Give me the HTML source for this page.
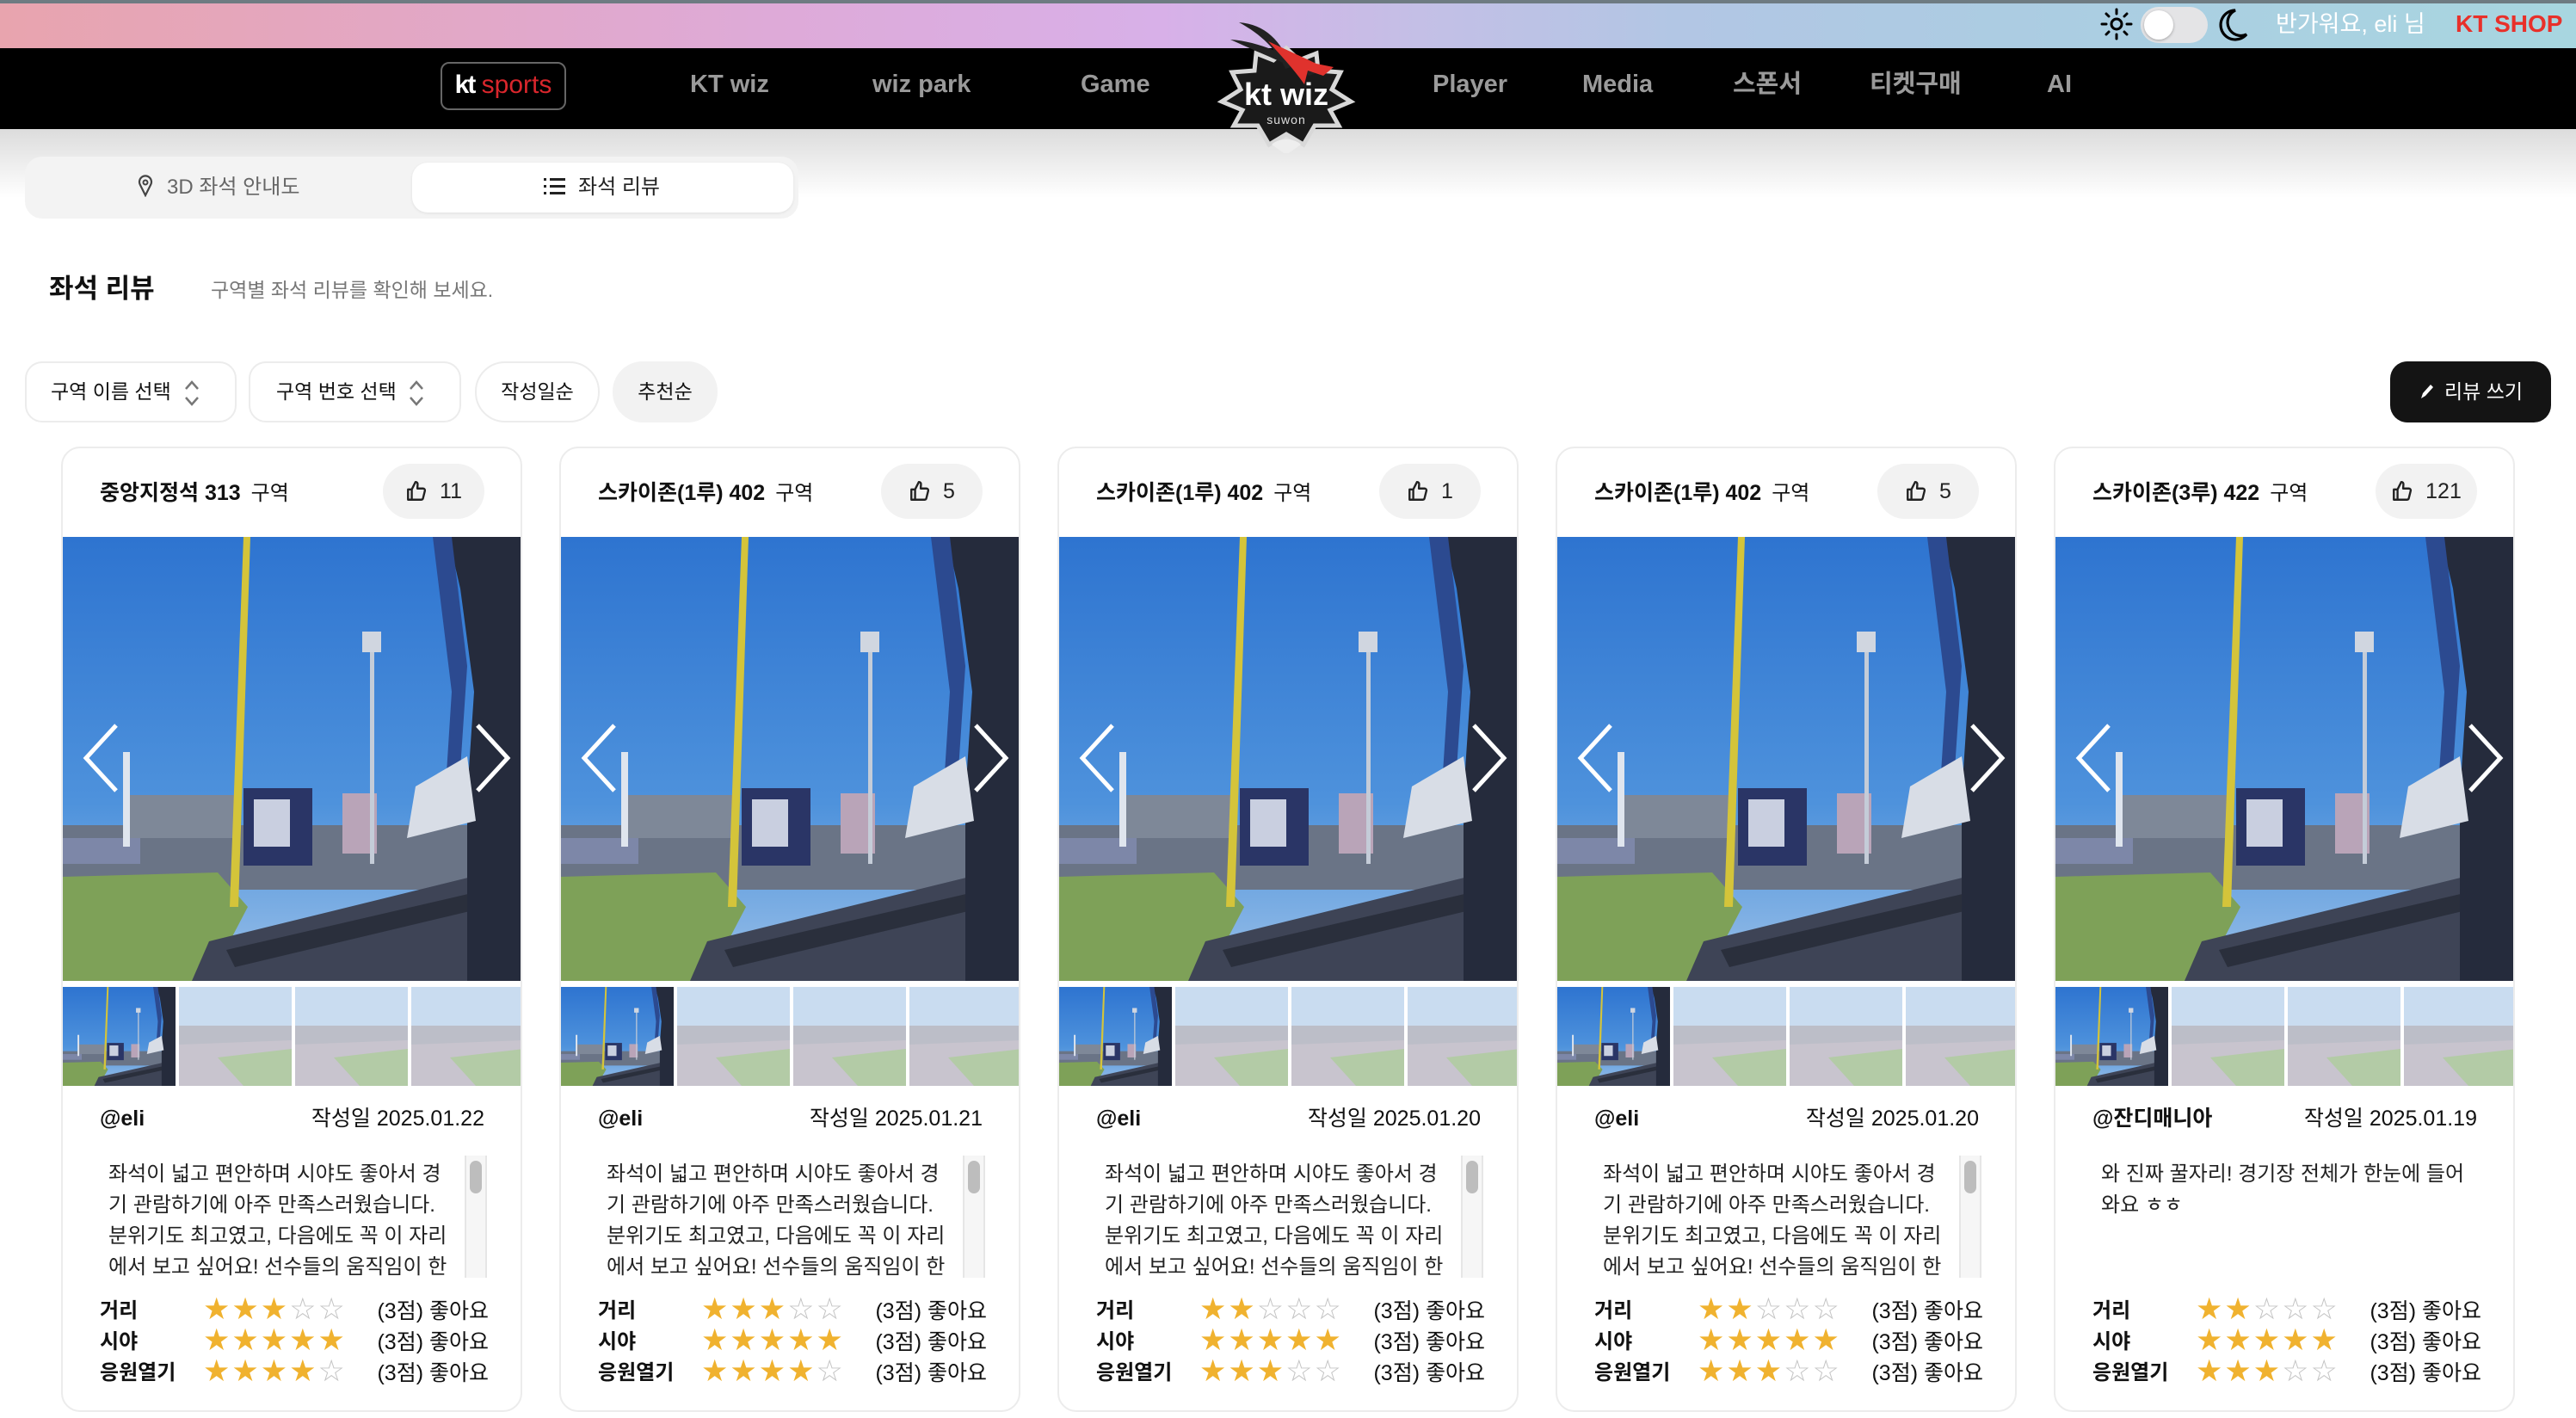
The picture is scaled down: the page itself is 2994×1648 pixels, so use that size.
<!DOCTYPE html>
<html><head><meta charset="utf-8">
<style>
*{box-sizing:border-box;margin:0;padding:0}
body{width:2994px;height:1648px;overflow:hidden;background:#fff;font-family:"Liberation Sans","Noto Sans CJK KR",sans-serif;position:relative;color:#111}
.abs{position:absolute}
.top{left:0;top:0;width:2994px;height:56px;background:linear-gradient(90deg,#e8a4ae 0%,#deaad8 30%,#d8b0e8 45%,#c4bfe6 55%,#b2c6e4 65%,#abcde2 80%,#a8d6e0 100%);border-top:4px solid #6e7b82}
.nav{left:0;top:56px;width:2994px;height:94px;background:#000}
.shadow{left:0;top:150px;width:2994px;height:80px;background:linear-gradient(#dcdcdc,#fff)}
.navi{top:78px;font-size:29px;font-weight:bold;color:#9a9a9a;line-height:40px;white-space:nowrap}
.card{width:536px;height:1122px;border:2px solid #ececec;border-radius:22px;background:#fff;overflow:hidden}
.ttl{left:43px;top:34px;font-size:25px;font-weight:bold;color:#111;white-space:nowrap;line-height:36px}
.ttl span{font-weight:normal;margin-left:12px;font-size:24px}
.pill{left:372px;top:18px;width:118px;height:64px;border-radius:32px;background:#f2f2f2;font-size:25px;color:#222;display:flex;align-items:center;justify-content:center;gap:14px}
.photo{left:0;top:103px;width:536px;height:516px}
.th{top:626px;width:131px;height:115px}
.user{left:43px;top:761px;font-size:25px;font-weight:bold;line-height:36px}
.date{right:42px;top:761px;font-size:25px;line-height:36px}
.body{left:53px;top:826px;width:405px;height:148px;overflow:hidden;font-size:24px;line-height:36px;color:#222;white-space:nowrap}
.sb{left:467px;top:822px;width:26px;height:142px;background:#f6f6f6;border-left:2px solid #e6e6e6;border-right:2px solid #e6e6e6}
.sb i{position:absolute;left:4px;top:6px;width:14px;height:38px;border-radius:8px;background:#bdbdbd}
.rt{left:43px;width:452px;height:36px;font-size:24px;line-height:36px}
.rt b{position:absolute;left:0;top:0}
.rt .st{position:absolute;left:120px;top:-6px;font-family:"DejaVu Sans",sans-serif;font-size:35px;line-height:44px;letter-spacing:2px;color:#f0b22f;white-space:nowrap}
.rt .st em{font-style:normal;color:#c4c4c4}
.rt .tx{position:absolute;right:0;top:0;font-size:25px}
</style></head><body>
<svg width="0" height="0" style="position:absolute">
<defs>
<linearGradient id="sky" x1="0" y1="0" x2="0" y2="1"><stop offset="0" stop-color="#2e74d0"/><stop offset="0.6" stop-color="#4e92dc"/><stop offset="1" stop-color="#9ac0e8"/></linearGradient>
<symbol id="ph" viewBox="0 0 536 516" preserveAspectRatio="none">
<rect width="536" height="516" fill="url(#sky)"/>
<rect x="0" y="335" width="536" height="75" fill="#6a7486"/>
<rect x="70" y="300" width="130" height="50" fill="#7e8898"/>
<rect x="210" y="292" width="80" height="90" fill="#2a3566"/>
<rect x="222" y="305" width="42" height="55" fill="#c9cfe0"/>
<rect x="325" y="298" width="40" height="70" fill="#b9a4b8"/>
<rect x="0" y="350" width="90" height="30" fill="#7d87a8"/>
<polygon points="0,395 180,390 215,430 170,516 0,516" fill="#7ea158"/>
<polygon points="170,470 536,380 536,516 150,516" fill="#3e4456"/>
<polygon points="190,480 536,400 536,420 200,500" fill="#2a2f3c"/>
<polygon points="448,0 536,0 536,516 470,516 470,340 470,300 478,180 462,60" fill="#252b3c"/>
<polygon points="430,0 452,0 470,150 462,270 445,290 452,180" fill="#2c4a90"/>
<polygon points="410,290 470,255 480,330 400,350" fill="#d8dde6"/>
<polygon points="210,0 218,0 204,430 194,430" fill="#d4c43a"/>
<rect x="357" y="120" width="5" height="260" fill="#c4ccd8"/>
<rect x="348" y="110" width="22" height="24" fill="#d0d6e0"/>
<rect x="70" y="250" width="8" height="110" fill="#dfe5ee"/>
</symbol>
<symbol id="pl" viewBox="0 0 131 115" preserveAspectRatio="none">
<rect width="131" height="115" fill="#c9dcf0"/>
<rect y="45" width="131" height="22" fill="#bcbec8"/>
<polygon points="0,67 131,62 131,115 0,115" fill="#c8c4ce"/>
<polygon points="45,82 131,72 131,115 75,115" fill="#b3cba6"/>
</symbol>
<symbol id="like" viewBox="0 0 24 24"><path d="M7 10v11H3V10h4zm0 0l4-8c1.5 0 2.5 1 2.3 2.6L13 9h6.2c1.3 0 2.2 1.2 1.9 2.4l-2 8c-.2.9-1 1.6-2 1.6H7" fill="none" stroke="#222" stroke-width="2.2" stroke-linejoin="round"/></symbol>
</defs></svg>

<div class="abs top"></div>
<div class="abs nav"></div>
<div class="abs shadow"></div>

<svg class="abs" style="left:2440px;top:8px" width="40" height="40" viewBox="0 0 40 40"><circle cx="20" cy="20" r="6" fill="none" stroke="#000" stroke-width="3"/><g stroke="#000" stroke-width="3" stroke-linecap="round"><path d="M20 3v5M20 32v5M3 20h5M32 20h5M8 8l3 3M29 29l3 3M8 32l3-3M29 11l3-3"/></g></svg>
<div class="abs" style="left:2488px;top:8px;width:78px;height:42px;border-radius:21px;background:#e4e4e6"><div style="position:absolute;left:4px;top:4px;width:34px;height:34px;border-radius:17px;background:#fff;box-shadow:0 1px 3px rgba(0,0,0,.3)"></div></div>
<svg class="abs" style="left:2578px;top:8px" width="36" height="42" viewBox="0 0 36 42"><path d="M20 4A17 17 0 1 0 33 32 14 14 0 0 1 20 4z" fill="none" stroke="#000" stroke-width="3.2"/></svg>
<div class="abs" style="left:2645px;top:10px;font-size:27px;color:#fff;white-space:nowrap;line-height:36px">반가워요, eli 님</div>
<div class="abs" style="left:2854px;top:10px;font-size:28px;color:#e8302a;font-weight:bold;white-space:nowrap;line-height:36px">KT SHOP</div>

<div class="abs" style="left:512px;top:72px;width:146px;height:56px;border:2px solid #666;border-radius:10px;background:#000;font-size:30px;line-height:50px;text-align:center;white-space:nowrap"><b style="color:#fff;letter-spacing:-2px">kt</b><span style="color:#d9262c"> sports</span></div>
<div class="abs navi" style="left:802px">KT wiz</div>
<div class="abs navi" style="left:1014px">wiz park</div>
<div class="abs navi" style="left:1256px">Game</div>
<div class="abs navi" style="left:1665px">Player</div>
<div class="abs navi" style="left:1839px">Media</div>
<div class="abs navi" style="left:2014px">스폰서</div>
<div class="abs navi" style="left:2173px">티켓구매</div>
<div class="abs navi" style="left:2379px">AI</div>

<svg class="abs" style="left:1410px;top:18px" width="170" height="160" viewBox="0 0 170 160">
<polygon points="85,38 100,52 120,44 122,64 148,66 138,86 160,100 136,110 146,128 118,128 105,150 85,138 65,150 52,128 24,128 34,110 10,100 32,86 22,66 48,64 50,44 70,52" fill="#1a1a1a" stroke="#d8d8d8" stroke-width="5"/>
<path d="M30 8C60 10 80 30 90 60L84 62C74 40 56 22 30 8z" fill="#222"/>
<path d="M20 28C60 30 100 56 130 62L112 70C90 58 60 46 20 28z" fill="#222"/>
<path d="M64 30L120 56 140 60 128 70 110 64 106 80C92 60 78 46 64 30z" fill="#e0322d"/>
<text x="85" y="104" text-anchor="middle" font-family="Liberation Sans,sans-serif" font-weight="bold" font-size="36" fill="#fff">kt wiz</text>
<text x="85" y="126" text-anchor="middle" font-family="Liberation Sans,sans-serif" font-size="14" fill="#ddd" letter-spacing="1">suwon</text>
<path d="M68 150C76 142 94 142 102 150L85 162z" fill="#eee"/>
</svg>

<div class="abs" style="left:29px;top:182px;width:899px;height:72px;border-radius:20px;background:#f3f3f3"></div>
<div class="abs" style="left:479px;top:189px;width:443px;height:58px;border-radius:18px;background:#fff;box-shadow:0 1px 3px rgba(0,0,0,.08)"></div>
<div class="abs" style="left:158px;top:200px;font-size:24px;color:#666;line-height:36px;white-space:nowrap">
<svg width="22" height="26" viewBox="0 0 22 26" style="vertical-align:-4px;margin-right:14px"><path d="M11 24l-6-12a7 7 0 1 1 12 0z" fill="none" stroke="#444" stroke-width="2.2"/><circle cx="11" cy="9" r="2.5" fill="none" stroke="#444" stroke-width="2"/></svg>3D 좌석 안내도</div>
<div class="abs" style="left:632px;top:200px;font-size:24px;color:#222;line-height:36px;white-space:nowrap">
<svg width="26" height="22" viewBox="0 0 26 22" style="vertical-align:-3px;margin-right:14px"><g fill="#222"><rect x="0" y="1" width="3" height="3"/><rect x="0" y="9" width="3" height="3"/><rect x="0" y="17" width="3" height="3"/><rect x="7" y="1" width="18" height="3"/><rect x="7" y="9" width="18" height="3"/><rect x="7" y="17" width="18" height="3"/></g></svg>좌석 리뷰</div>

<div class="abs" style="left:57px;top:316px;font-size:31px;font-weight:bold;line-height:40px;white-space:nowrap">좌석 리뷰</div>
<div class="abs" style="left:245px;top:320px;font-size:23px;color:#777;line-height:34px;white-space:nowrap">구역별 좌석 리뷰를 확인해 보세요.</div>

<div class="abs" style="left:29px;top:420px;width:246px;height:71px;border:2px solid #ececec;border-radius:20px;font-size:23px;line-height:67px;padding-left:28px;white-space:nowrap">구역 이름 선택</div>
<div class="abs" style="left:289px;top:420px;width:247px;height:71px;border:2px solid #ececec;border-radius:20px;font-size:23px;line-height:67px;padding-left:30px;white-space:nowrap">구역 번호 선택</div>
<svg class="abs" style="left:212px;top:440px" width="22" height="34" viewBox="0 0 22 34"><path d="M4 12l7-8 7 8M4 22l7 8 7-8" fill="none" stroke="#777" stroke-width="2.5"/></svg>
<svg class="abs" style="left:473px;top:440px" width="22" height="34" viewBox="0 0 22 34"><path d="M4 12l7-8 7 8M4 22l7 8 7-8" fill="none" stroke="#777" stroke-width="2.5"/></svg>
<div class="abs" style="left:552px;top:420px;width:145px;height:71px;border:2px solid #ececec;border-radius:35px;font-size:23px;line-height:67px;text-align:center">작성일순</div>
<div class="abs" style="left:712px;top:420px;width:122px;height:71px;border-radius:35px;background:#f2f2f2;font-size:23px;line-height:71px;text-align:center">추천순</div>
<div class="abs" style="left:2778px;top:420px;width:187px;height:71px;border-radius:20px;background:#141414;color:#fff;font-size:23px;line-height:71px;text-align:center;white-space:nowrap">
<svg width="20" height="22" viewBox="0 0 20 22" style="vertical-align:-3px;margin-right:10px"><path d="M3 19l2-6 9-10 3 3-9 10z" fill="#fff"/></svg>리뷰 쓰기</div>

<div class="abs card" style="left:71px;top:519px">
<div class="abs ttl">중앙지정석 313<span>구역</span></div>
<div class="abs pill"><svg width="26" height="26"><use href="#like"/></svg>11</div>
<svg class="abs photo"><use href="#ph"/></svg>
<svg class="abs" style="left:22px;top:320px" width="500" height="80" viewBox="0 0 500 80"><path d="M40 2L5 40 40 78M460 2L495 40 460 78" fill="none" stroke="#fff" stroke-width="5"/></svg>
<svg class="abs th" style="left:0"><use href="#ph"/></svg><svg class="abs th" style="left:135px"><use href="#pl"/></svg><svg class="abs th" style="left:270px"><use href="#pl"/></svg><svg class="abs th" style="left:405px"><use href="#pl"/></svg>
<div class="abs user">@eli</div><div class="abs date">작성일 2025.01.22</div>
<div class="abs body">좌석이 넓고 편안하며 시야도 좋아서 경<br>기 관람하기에 아주 만족스러웠습니다.<br>분위기도 최고였고, 다음에도 꼭 이 자리<br>에서 보고 싶어요! 선수들의 움직임이 한</div>
<div class="abs sb"><i></i></div>
<div class="abs rt" style="top:985px"><b>거리</b><span class="st">★★★<em>☆☆</em></span><span class="tx">(3점) 좋아요</span></div>
<div class="abs rt" style="top:1021px"><b>시야</b><span class="st">★★★★★</span><span class="tx">(3점) 좋아요</span></div>
<div class="abs rt" style="top:1057px"><b>응원열기</b><span class="st">★★★★<em>☆</em></span><span class="tx">(3점) 좋아요</span></div>
</div>

<div class="abs card" style="left:650px;top:519px">
<div class="abs ttl">스카이존(1루) 402<span>구역</span></div>
<div class="abs pill"><svg width="26" height="26"><use href="#like"/></svg>5</div>
<svg class="abs photo"><use href="#ph"/></svg>
<svg class="abs" style="left:22px;top:320px" width="500" height="80" viewBox="0 0 500 80"><path d="M40 2L5 40 40 78M460 2L495 40 460 78" fill="none" stroke="#fff" stroke-width="5"/></svg>
<svg class="abs th" style="left:0"><use href="#ph"/></svg><svg class="abs th" style="left:135px"><use href="#pl"/></svg><svg class="abs th" style="left:270px"><use href="#pl"/></svg><svg class="abs th" style="left:405px"><use href="#pl"/></svg>
<div class="abs user">@eli</div><div class="abs date">작성일 2025.01.21</div>
<div class="abs body">좌석이 넓고 편안하며 시야도 좋아서 경<br>기 관람하기에 아주 만족스러웠습니다.<br>분위기도 최고였고, 다음에도 꼭 이 자리<br>에서 보고 싶어요! 선수들의 움직임이 한</div>
<div class="abs sb"><i></i></div>
<div class="abs rt" style="top:985px"><b>거리</b><span class="st">★★★<em>☆☆</em></span><span class="tx">(3점) 좋아요</span></div>
<div class="abs rt" style="top:1021px"><b>시야</b><span class="st">★★★★★</span><span class="tx">(3점) 좋아요</span></div>
<div class="abs rt" style="top:1057px"><b>응원열기</b><span class="st">★★★★<em>☆</em></span><span class="tx">(3점) 좋아요</span></div>
</div>

<div class="abs card" style="left:1229px;top:519px">
<div class="abs ttl">스카이존(1루) 402<span>구역</span></div>
<div class="abs pill"><svg width="26" height="26"><use href="#like"/></svg>1</div>
<svg class="abs photo"><use href="#ph"/></svg>
<svg class="abs" style="left:22px;top:320px" width="500" height="80" viewBox="0 0 500 80"><path d="M40 2L5 40 40 78M460 2L495 40 460 78" fill="none" stroke="#fff" stroke-width="5"/></svg>
<svg class="abs th" style="left:0"><use href="#ph"/></svg><svg class="abs th" style="left:135px"><use href="#pl"/></svg><svg class="abs th" style="left:270px"><use href="#pl"/></svg><svg class="abs th" style="left:405px"><use href="#pl"/></svg>
<div class="abs user">@eli</div><div class="abs date">작성일 2025.01.20</div>
<div class="abs body">좌석이 넓고 편안하며 시야도 좋아서 경<br>기 관람하기에 아주 만족스러웠습니다.<br>분위기도 최고였고, 다음에도 꼭 이 자리<br>에서 보고 싶어요! 선수들의 움직임이 한</div>
<div class="abs sb"><i></i></div>
<div class="abs rt" style="top:985px"><b>거리</b><span class="st">★★<em>☆☆☆</em></span><span class="tx">(3점) 좋아요</span></div>
<div class="abs rt" style="top:1021px"><b>시야</b><span class="st">★★★★★</span><span class="tx">(3점) 좋아요</span></div>
<div class="abs rt" style="top:1057px"><b>응원열기</b><span class="st">★★★<em>☆☆</em></span><span class="tx">(3점) 좋아요</span></div>
</div>

<div class="abs card" style="left:1808px;top:519px">
<div class="abs ttl">스카이존(1루) 402<span>구역</span></div>
<div class="abs pill"><svg width="26" height="26"><use href="#like"/></svg>5</div>
<svg class="abs photo"><use href="#ph"/></svg>
<svg class="abs" style="left:22px;top:320px" width="500" height="80" viewBox="0 0 500 80"><path d="M40 2L5 40 40 78M460 2L495 40 460 78" fill="none" stroke="#fff" stroke-width="5"/></svg>
<svg class="abs th" style="left:0"><use href="#ph"/></svg><svg class="abs th" style="left:135px"><use href="#pl"/></svg><svg class="abs th" style="left:270px"><use href="#pl"/></svg><svg class="abs th" style="left:405px"><use href="#pl"/></svg>
<div class="abs user">@eli</div><div class="abs date">작성일 2025.01.20</div>
<div class="abs body">좌석이 넓고 편안하며 시야도 좋아서 경<br>기 관람하기에 아주 만족스러웠습니다.<br>분위기도 최고였고, 다음에도 꼭 이 자리<br>에서 보고 싶어요! 선수들의 움직임이 한</div>
<div class="abs sb"><i></i></div>
<div class="abs rt" style="top:985px"><b>거리</b><span class="st">★★<em>☆☆☆</em></span><span class="tx">(3점) 좋아요</span></div>
<div class="abs rt" style="top:1021px"><b>시야</b><span class="st">★★★★★</span><span class="tx">(3점) 좋아요</span></div>
<div class="abs rt" style="top:1057px"><b>응원열기</b><span class="st">★★★<em>☆☆</em></span><span class="tx">(3점) 좋아요</span></div>
</div>

<div class="abs card" style="left:2387px;top:519px">
<div class="abs ttl">스카이존(3루) 422<span>구역</span></div>
<div class="abs pill"><svg width="26" height="26"><use href="#like"/></svg>121</div>
<svg class="abs photo"><use href="#ph"/></svg>
<svg class="abs" style="left:22px;top:320px" width="500" height="80" viewBox="0 0 500 80"><path d="M40 2L5 40 40 78M460 2L495 40 460 78" fill="none" stroke="#fff" stroke-width="5"/></svg>
<svg class="abs th" style="left:0"><use href="#ph"/></svg><svg class="abs th" style="left:135px"><use href="#pl"/></svg><svg class="abs th" style="left:270px"><use href="#pl"/></svg><svg class="abs th" style="left:405px"><use href="#pl"/></svg>
<div class="abs user">@잔디매니아</div><div class="abs date">작성일 2025.01.19</div>
<div class="abs body" style="width:440px">와 진짜 꿀자리! 경기장 전체가 한눈에 들어<br>와요 ㅎㅎ</div>
<div class="abs rt" style="top:985px"><b>거리</b><span class="st">★★<em>☆☆☆</em></span><span class="tx">(3점) 좋아요</span></div>
<div class="abs rt" style="top:1021px"><b>시야</b><span class="st">★★★★★</span><span class="tx">(3점) 좋아요</span></div>
<div class="abs rt" style="top:1057px"><b>응원열기</b><span class="st">★★★<em>☆☆</em></span><span class="tx">(3점) 좋아요</span></div>
</div>
</body></html>
